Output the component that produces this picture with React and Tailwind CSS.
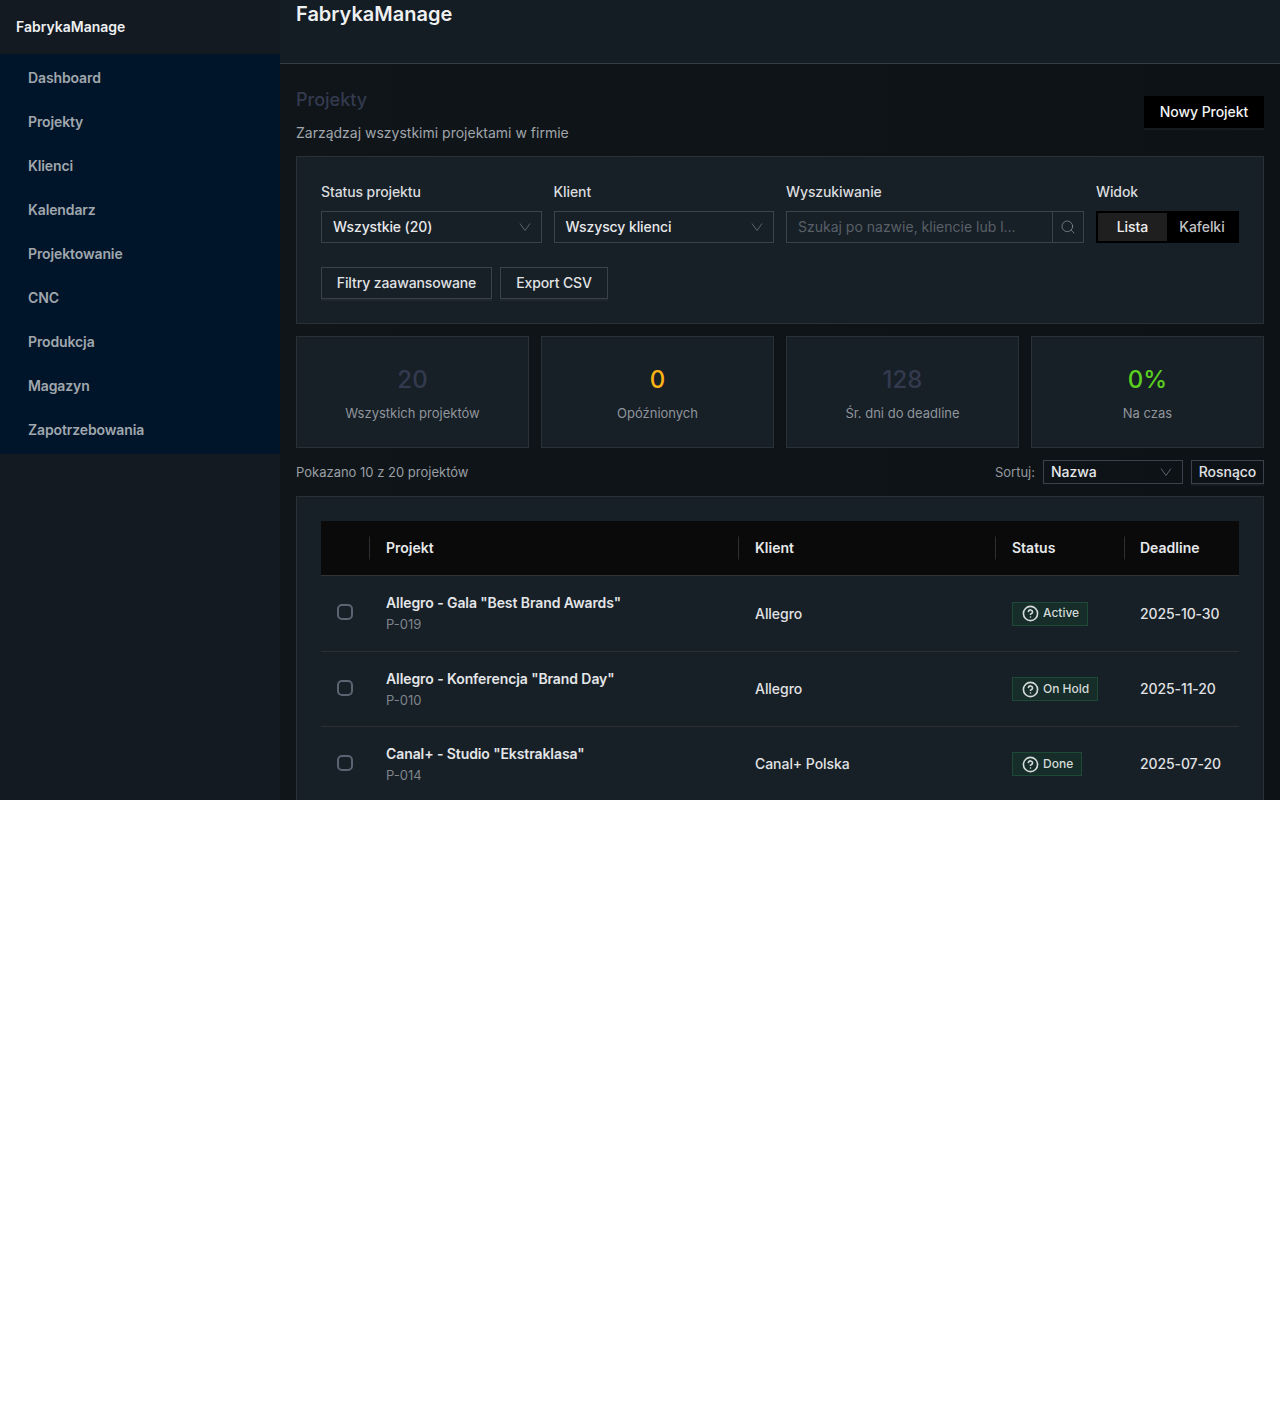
import React from "react";
import { Search, CircleHelp } from "lucide-react";

const nav = ["Dashboard","Projekty","Klienci","Kalendarz","Projektowanie","CNC","Produkcja","Magazyn","Zapotrzebowania"];
const stats = [
  ["20","text-[#343a4e]","Wszystkich projektów"],
  ["0","text-[#fbb316]","Opóźnionych"],
  ["128","text-[#343a4e]","Śr. dni do deadline"],
  ["0%","text-[#5bd01f]","Na czas"],
];
const rows = [
  ['Allegro - Gala "Best Brand Awards"',"P-019","Allegro","Active","2025-10-30","h-[76px]"],
  ['Allegro - Konferencja "Brand Day"',"P-010","Allegro","On Hold","2025-11-20","h-[75px]"],
  ['Canal+ - Studio "Ekstraklasa"',"P-014","Canal+ Polska","Done","2025-07-20","h-[75px]"],
];

function Chevron() {
  return (
    <svg width="12" height="12" viewBox="0 0 12 12" fill="none" stroke="#5c636b" strokeWidth="1" className="shrink-0">
      <path d="M1 2.5 L6 9.5 L11 2.5" />
    </svg>
  );
}

function Select({ value }) {
  return (
    <div className="h-8 border border-[#3a424c] flex items-center justify-between pl-[11px] pr-[10px] text-sm font-medium tracking-[-0.1px] text-[#e6e8ea]">
      <span>{value}</span>
      <Chevron />
    </div>
  );
}

function Th({ children, pad = "pl-[17px]" }) {
  return (
    <th className={"relative p-0 text-left text-sm font-semibold text-[#e6e8ea] " + pad}>
      <span className="absolute left-0 top-1/2 -translate-y-1/2 h-[23px] w-px bg-[#2c2f33]" />
      {children}
    </th>
  );
}

const label = "text-sm font-medium tracking-[-0.1px] leading-[22px] mb-2 text-[#dadcde]";
const outlineBtn = "h-8 border border-[#3a424c] shadow-[0_2px_0_rgba(255,255,255,0.04)] text-sm font-medium tracking-[-0.1px] text-[#e0e2e4]";

export default function App() {
  return (
    <div className="h-[800px] overflow-hidden flex bg-[#0e1318] font-['Inter',sans-serif]">
      <aside className="w-[280px] shrink-0 bg-[#131a21]">
        <div className="h-[54px] flex items-center pl-4 text-sm font-semibold text-[#eef0f2]">FabrykaManage</div>
        <nav className="bg-[#001529] py-0.5">
          {nav.map((n) => (
            <div key={n} className="h-11 flex items-center pl-7 text-sm font-semibold tracking-[-0.12px] text-[#a0a7ae]">{n}</div>
          ))}
        </nav>
      </aside>
      <div className="flex-1 min-w-0">
        <header className="h-16 bg-[#141c24] border-b border-[#363d45] px-4">
          <div className="text-xl font-semibold leading-7 text-[#eef0f2]">FabrykaManage</div>
        </header>
        <main className="p-4 bg-gradient-to-r from-[#0f1519] to-[#0d1216] h-full">
          <div className="flex items-start justify-between h-[76px]">
            <div>
              <h1 className="text-lg font-medium leading-7 text-[#343a4e] mt-[6px]">Projekty</h1>
              <p className="mt-2 text-sm leading-[22px] text-[#a1a6ab]">Zarządzaj wszystkimi projektami w firmie</p>
            </div>
            <button className="mt-4 h-8 w-[120px] bg-black shadow-[0_2px_0_rgba(255,255,255,0.04)] text-sm font-medium tracking-[-0.05px] text-[#f2f3f4]">Nowy Projekt</button>
          </div>

          <section className="bg-[#171f27] border border-[#2c3137] h-[168px] p-6">
            <div className="flex gap-3">
              <div className="w-[220.6px]">
                <div className={label}>Status projektu</div>
                <Select value="Wszystkie (20)" />
              </div>
              <div className="w-[220.4px]">
                <div className={label}>Klient</div>
                <Select value="Wszyscy klienci" />
              </div>
              <div className="w-[298px]">
                <div className={label}>Wyszukiwanie</div>
                <div className="h-8 flex border border-[#3a424c]">
                  <div className="flex-1 flex items-center pl-[11px] text-sm text-[#5a6067]">Szukaj po nazwie, kliencie lub l...</div>
                  <div className="w-[31px] border-l border-[#3a424c] flex items-center justify-center text-[#9aa0a6]">
                    <Search size={16} strokeWidth={1} />
                  </div>
                </div>
              </div>
              <div className="w-[143px]">
                <div className={label}>Widok</div>
                <div className="h-8 bg-black p-0.5 flex text-sm font-medium tracking-[-0.05px]">
                  <div className="w-[69px] h-7 bg-[#1f1f1f] text-[#f0f0f0] flex items-center justify-center">Lista</div>
                  <div className="flex-1 text-[#c0c2c4] flex items-center justify-center">Kafelki</div>
                </div>
              </div>
            </div>
            <div className="flex gap-2 mt-6">
              <button className={outlineBtn + " w-[171px]"}>Filtry zaawansowane</button>
              <button className={outlineBtn + " w-[108px]"}>Export CSV</button>
            </div>
          </section>

          <section className="grid grid-cols-4 gap-3 mt-3">
            {stats.map(([v, c, l]) => (
              <div key={l} className="h-28 bg-[#171f27] border border-[#2c3137] flex flex-col items-center pt-6">
                <div className={"text-2xl leading-[38px] font-medium " + c}>{v}</div>
                <div className="mt-1 text-[13px] leading-[20px] text-[#90959b]">{l}</div>
              </div>
            ))}
          </section>

          <div className="flex items-center justify-between mt-3 h-6">
            <div className="text-[13px] pt-px text-[#9a9fa4]">Pokazano 10 z 20 projektów</div>
            <div className="flex items-center">
              <span className="text-[13px] pt-px text-[#94999e] mr-2">Sortuj:</span>
              <div className="h-6 w-[140px] border border-[#3a424c] flex items-center justify-between pl-[7px] pr-[10px] text-sm font-medium tracking-[-0.05px] text-[#e6e8ea]">
                <span>Nazwa</span>
                <Chevron />
              </div>
              <button className="ml-2 h-6 w-[73px] border border-[#3a424c] shadow-[0_2px_0_rgba(255,255,255,0.04)] text-sm font-medium tracking-[-0.05px] text-[#e0e2e4]">Rosnąco</button>
            </div>
          </div>

          <section className="mt-3 bg-[#171f27] border border-[#2c3137] p-6">
            <table className="w-full table-fixed border-collapse">
              <colgroup>
                <col className="w-12" />
                <col className="w-[369px]" />
                <col className="w-[257px]" />
                <col className="w-[129px]" />
                <col />
              </colgroup>
              <thead>
                <tr className="h-[54px] bg-[#0a0a0a] border-b border-[#303336]">
                  <th className="p-0"></th>
                  <Th>Projekt</Th>
                  <Th>Klient</Th>
                  <Th>Status</Th>
                  <Th pad="pl-4">Deadline</Th>
                </tr>
              </thead>
              <tbody>
                {rows.map(([t, id, k, s, d, h]) => (
                  <tr key={id} className={h + " border-b border-[#2c3035]"}>
                    <td className="p-0">
                      <div className="w-4 h-4 ml-4 -mt-0.5 rounded-[5px] border-2 border-[#5b6472]" />
                    </td>
                    <td className="p-0 pl-[17px]">
                      <div className="text-sm font-semibold tracking-[-0.09px] leading-[22px] text-[#e4e6e8]">{t}</div>
                      <div className="text-[13px] leading-5 text-[#7f858b]">{id}</div>
                    </td>
                    <td className="p-0 pl-[17px] pt-px text-sm font-medium tracking-[-0.05px] text-[#e0e2e4]">{k}</td>
                    <td className="p-0 pl-[17px] pt-[4px]">
                      <span className="inline-flex items-center h-6 pl-[9px] pr-2 gap-1 bg-[#162d2a] border border-[#1d4a37] text-xs font-medium text-[#d4dad8]">
                        <CircleHelp size={17} strokeWidth={2.3} />
                        <span className="-mt-px">{s}</span>
                      </span>
                    </td>
                    <td className="p-0 pl-4 pt-px text-sm font-medium tracking-[-0.1px] text-[#e0e2e4]">{d}</td>
                  </tr>
                ))}
              </tbody>
            </table>
          </section>
        </main>
      </div>
    </div>
  );
}
